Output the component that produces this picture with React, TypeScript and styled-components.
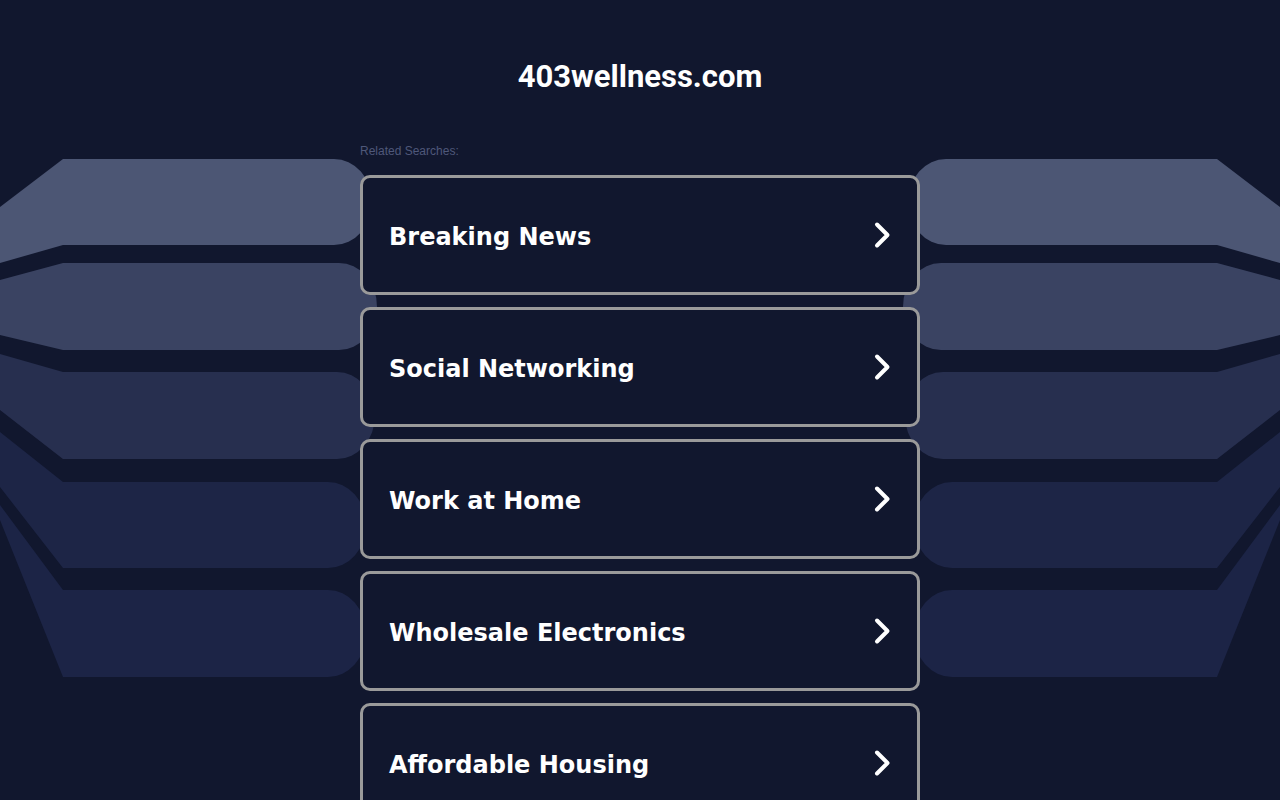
import React from 'react';
import styled, { createGlobalStyle } from 'styled-components';

const GlobalStyle = createGlobalStyle`
  html, body {
    margin: 0;
    padding: 0;
    background: #11172e;
  }
  body {
    font-family: "Liberation Sans", Arial, sans-serif;
  }
`;

const searches = [
  'Breaking News',
  'Social Networking',
  'Work at Home',
  'Wholesale Electronics',
  'Affordable Housing',
];

// left-hand bands of the backdrop; the right side is a mirror
const bands = [
  { top: 159, bottom: 245, lt: 207, lb: 263, end: 372, color: '#4c5674' },
  { top: 263, bottom: 350, lt: 280, lb: 335, end: 377, color: '#3a4362' },
  { top: 372, bottom: 459, lt: 354, lb: 410, end: 375, color: '#272f4f' },
  { top: 482, bottom: 568, lt: 432, lb: 487, end: 366, color: '#1d2546' },
  { top: 590, bottom: 677, lt: 505, lb: 520, end: 366, color: '#1c2446' },
];

const bandPath = (b: typeof bands[number]) => {
  const rx = 38;
  const ry = (b.bottom - b.top) / 2;
  const x = b.end - rx;
  return `M0,${b.lt} L63,${b.top} L${x},${b.top} A${rx} ${ry} 0 0 1 ${x},${b.bottom} L63,${b.bottom} L0,${b.lb} Z`;
};

const Page = styled.div`
  position: relative;
  min-height: 100vh;
  overflow: hidden;
  background: #11172e;
`;

const Backdrop = styled.svg`
  position: absolute;
  top: 0;
  left: 0;
  width: 1280px;
  height: 800px;
  pointer-events: none;
`;

const Main = styled.main`
  position: relative;
  z-index: 1;
  width: 560px;
  margin: 0 auto;
  display: flex;
  flex-direction: column;
`;

const Title = styled.h1`
  margin: 0;
  padding-top: 59px;
  font-family: Roboto, "Liberation Sans", sans-serif;
  font-weight: 700;
  font-size: 31px;
  line-height: 36px;
  color: #ffffff;
  text-align: center;
`;

const Label = styled.div`
  margin-top: 49px;
  font-family: "Liberation Sans", Arial, sans-serif;
  font-size: 12px;
  line-height: 14px;
  color: #4f587a;
`;

const List = styled.div`
  margin-top: 17px;
  display: flex;
  flex-direction: column;
  gap: 12px;
`;

const Card = styled.a`
  box-sizing: border-box;
  height: 120px;
  display: flex;
  align-items: center;
  justify-content: space-between;
  padding: 0 26px;
  border: 3px solid #9a9a9a;
  border-radius: 10px;
  background: #11172e;
  color: #ffffff;
  text-decoration: none;
  cursor: pointer;
`;

const CardText = styled.span`
  margin-top: 3px;
  font-family: "DejaVu Sans", Verdana, sans-serif;
  font-weight: 700;
  font-size: 24px;
`;

const Chevron = () => (
  <svg width="18" height="28" viewBox="0 0 18 28" fill="none">
    <polyline
      points="4,3.5 14.5,14 4,24.5"
      stroke="#ffffff"
      strokeWidth="4"
      strokeLinecap="round"
      strokeLinejoin="round"
    />
  </svg>
);

export default function App() {
  return (
    <Page>
      <GlobalStyle />
      <Backdrop viewBox="0 0 1280 800" aria-hidden="true">
        {bands.map((b, i) => (
          <path key={`l${i}`} d={bandPath(b)} fill={b.color} />
        ))}
        <g transform="translate(1280,0) scale(-1,1)">
          {bands.map((b, i) => (
            <path key={`r${i}`} d={bandPath(b)} fill={b.color} />
          ))}
        </g>
      </Backdrop>
      <Main>
        <Title>403wellness.com</Title>
        <Label>Related Searches:</Label>
        <List>
          {searches.map((s) => (
            <Card key={s}>
              <CardText>{s}</CardText>
              <Chevron />
            </Card>
          ))}
        </List>
      </Main>
    </Page>
  );
}
